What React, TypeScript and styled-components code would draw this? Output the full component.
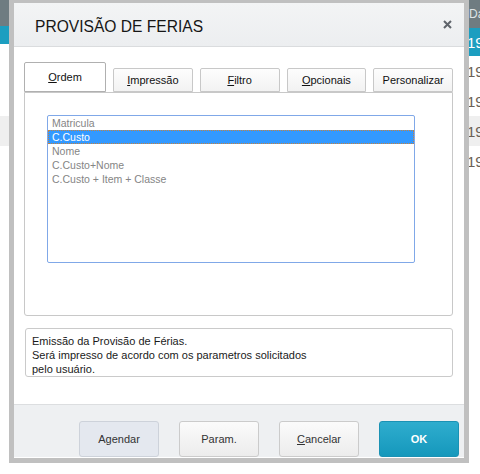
import React, { useState } from "react";
import styled, { createGlobalStyle } from "styled-components";

const GlobalStyle = createGlobalStyle`
  html, body {
    margin: 0;
    padding: 0;
    background: #ffffff;
    overflow: hidden;
    font-family: "Liberation Sans", Arial, sans-serif;
  }
`;

const Screen = styled.div`
  position: relative;
  display: flex;
  width: 480px;
  height: 474px;
  overflow: hidden;
  background: #ffffff;
`;

/* --- application behind the dialog --- */

const SidePane = styled.div`
  display: flex;
  flex-direction: column;
  flex: 0 0 240px;
`;

const SideHeader = styled.div`
  height: 26px;
  background: #6f7c81;
`;

const SideItem = styled.div<{ $tone: "teal" | "plain" | "shade"; $h: number }>`
  height: ${(p) => p.$h}px;
  background: ${(p) =>
    p.$tone === "teal" ? "#1c9ec0" : p.$tone === "shade" ? "#efefef" : "#ffffff"};
`;

const GridPane = styled.div`
  display: flex;
  flex-direction: column;
  flex: 1;
  min-width: 0;
`;

const GridRow = styled.div<{ $tone: "head" | "teal" | "plain" | "shade"; $h: number }>`
  display: grid;
  grid-template-columns: 227px minmax(0, 1fr);
  align-items: center;
  height: ${(p) => p.$h}px;
  font-size: 15px;
  white-space: nowrap;
  overflow: hidden;
  background: ${(p) =>
    p.$tone === "head"
      ? "#6f7c81"
      : p.$tone === "teal"
      ? "#1c9ec0"
      : p.$tone === "shade"
      ? "#efefef"
      : "#ffffff"};
  color: ${(p) =>
    p.$tone === "head" ? "#dfe4e6" : p.$tone === "teal" ? "#ffffff" : "#6a5f55"};
`;

const HeadCell = styled.span`
  overflow: hidden;
  padding-left: 2px;
  font-size: 12px;
  align-self: start;
  padding-top: 7px;
`;

const DateCell = styled.span`
  overflow: hidden;
`;

/* --- dialog --- */

const Modal = styled.div`
  position: absolute;
  left: 9px;
  top: -2px;
  width: 460px;
  height: 465px;
  box-sizing: border-box;
  border: 5px solid #c0c0c0;
  background: #ffffff;
  display: flex;
  flex-direction: column;
  z-index: 2;
`;

const TitleBar = styled.div`
  display: flex;
  align-items: center;
  justify-content: space-between;
  height: 43px;
  padding: 0 12px 0 21px;
  background: linear-gradient(#f3f4f5, #eceef0);
  border-bottom: 1px solid #dadcde;
`;

const Title = styled.h1`
  margin: 0;
  padding-top: 5px;
  font-size: 15.6px;
  font-weight: normal;
  color: #161616;
`;

const CloseButton = styled.button`
  display: flex;
  padding: 0;
  border: none;
  background: none;
  cursor: pointer;
`;

const Body = styled.div`
  display: flex;
  flex-direction: column;
  height: 343px;
  padding: 15px 11px 0 10px;
  border-bottom: 1px solid #dcdee0;
`;

const TabRow = styled.div`
  display: flex;
  align-items: flex-end;
  gap: 7px;
  height: 30px;
`;

const Tab = styled.div<{ $active?: boolean }>`
  display: flex;
  align-items: center;
  justify-content: center;
  box-sizing: border-box;
  min-width: 0;
  height: ${(p) => (p.$active ? 30 : 24)}px;
  ${(p) => (p.$active ? "width: 82px;" : "flex: 1;")}
  border: 1px solid ${(p) => (p.$active ? "#b0b0b0" : "#c8c8c8")};
  border-radius: 2px 2px 0 0;
  background: ${(p) => (p.$active ? "#ffffff" : "linear-gradient(#fdfdfd, #f2f2f2)")};
  font-size: 11px;
  color: #111;
  white-space: nowrap;
  cursor: default;
`;

const Panel = styled.div`
  box-sizing: border-box;
  height: 224px;
  padding: 22px 0 0 22px;
  border: 1px solid #c8c8c8;
  border-radius: 0 0 3px 3px;
`;

const ListBox = styled.ul`
  box-sizing: border-box;
  width: 368px;
  height: 148px;
  margin: 0;
  padding: 0;
  list-style: none;
  border: 1px solid #80a8e8;
  border-radius: 2px;
  background: #fff;
`;

const ListItem = styled.li<{ $selected?: boolean }>`
  box-sizing: border-box;
  height: 14px;
  line-height: 12px;
  padding-left: 3px;
  font-size: 10.5px;
  color: ${(p) => (p.$selected ? "#ffffff" : "#858585")};
  background: ${(p) => (p.$selected ? "#3399ff" : "transparent")};
  border: 1px ${(p) => (p.$selected ? "dotted #c8823c" : "solid transparent")};
  cursor: default;
`;

const Description = styled.div`
  box-sizing: border-box;
  height: 49px;
  margin: 12px 0 0 1px;
  padding: 5px 6px;
  border: 1px solid #cacaca;
  border-radius: 3px;
  font-size: 11px;
  line-height: 14px;
  color: #1a1a1a;
`;

const Footer = styled.div`
  display: flex;
  justify-content: flex-end;
  gap: 20px;
  flex: 1;
  padding: 16px 5px 0 0;
  background: #eef0f2;
  border-bottom: 1px solid #ffffff;
`;

const Button = styled.button<{ $variant?: "primary" | "soft" }>`
  width: 80px;
  height: 36px;
  border-radius: 3px;
  font-family: "Liberation Sans", Arial, sans-serif;
  font-size: 11px;
  cursor: pointer;
  border: 1px solid
    ${(p) =>
      p.$variant === "primary" ? "#1b92b4" : p.$variant === "soft" ? "#cdd2da" : "#cbcbcb"};
  background: ${(p) =>
    p.$variant === "primary"
      ? "linear-gradient(#2fadce, #1598bc)"
      : p.$variant === "soft"
      ? "#e4e8ef"
      : "linear-gradient(#fbfbfb, #ececec)"};
  color: ${(p) => (p.$variant === "primary" ? "#ffffff" : "#333333")};
  font-weight: ${(p) => (p.$variant === "primary" ? "bold" : "normal")};
`;

const orderOptions = [
  "Matricula",
  "C.Custo",
  "Nome",
  "C.Custo+Nome",
  "C.Custo + Item + Classe",
];

const gridRows: Array<{ tone: "teal" | "plain" | "shade"; h: number; date: string }> = [
  { tone: "teal", h: 28, date: "19" },
  { tone: "plain", h: 30, date: "19" },
  { tone: "plain", h: 30, date: "19" },
  { tone: "shade", h: 30, date: "19" },
  { tone: "plain", h: 30, date: "19" },
  { tone: "plain", h: 30, date: "" },
  { tone: "plain", h: 30, date: "" },
];

const App: React.FC = () => {
  const [selected, set_selected] = useState(1);

  return (
    <Screen>
      <GlobalStyle />
      <SidePane>
        <SideHeader />
        <SideItem $tone="teal" $h={18} />
        <SideItem $tone="plain" $h={72} />
        <SideItem $tone="shade" $h={30} />
        <SideItem $tone="plain" $h={328} />
      </SidePane>
      <GridPane>
        <GridRow $tone="head" $h={28}>
          <span />
          <HeadCell>Dat</HeadCell>
        </GridRow>
        {gridRows.map((row, index) => (
          <GridRow key={index} $tone={row.tone} $h={row.h}>
            <span />
            <DateCell>{row.date}</DateCell>
          </GridRow>
        ))}
      </GridPane>

      <Modal>
        <TitleBar>
          <Title>PROVISÃO DE FERIAS</Title>
          <CloseButton aria-label="Fechar">
            <svg width="9" height="9" viewBox="0 0 9 9">
              <path d="M1 1L8 8M8 1L1 8" stroke="#5f646b" strokeWidth="2" />
            </svg>
          </CloseButton>
        </TitleBar>
        <Body>
          <TabRow>
            <Tab $active>
              <span>
                <u>O</u>rdem
              </span>
            </Tab>
            <Tab>
              <span>
                <u>I</u>mpressão
              </span>
            </Tab>
            <Tab>
              <span>
                <u>F</u>iltro
              </span>
            </Tab>
            <Tab>
              <span>
                <u>O</u>pcionais
              </span>
            </Tab>
            <Tab>Personalizar</Tab>
          </TabRow>
          <Panel>
            <ListBox>
              {orderOptions.map((label, index) => (
                <ListItem
                  key={label}
                  $selected={index === selected}
                  onClick={() => set_selected(index)}
                >
                  {label}
                </ListItem>
              ))}
            </ListBox>
          </Panel>
          <Description>
            Emissão da Provisão de Férias.
            <br />
            Será impresso de acordo com os parametros solicitados
            <br />
            pelo usuário.
          </Description>
        </Body>
        <Footer>
          <Button $variant="soft">Agendar</Button>
          <Button>Param.</Button>
          <Button>
            <u>C</u>ancelar
          </Button>
          <Button $variant="primary">OK</Button>
        </Footer>
      </Modal>
    </Screen>
  );
};

export default App;
